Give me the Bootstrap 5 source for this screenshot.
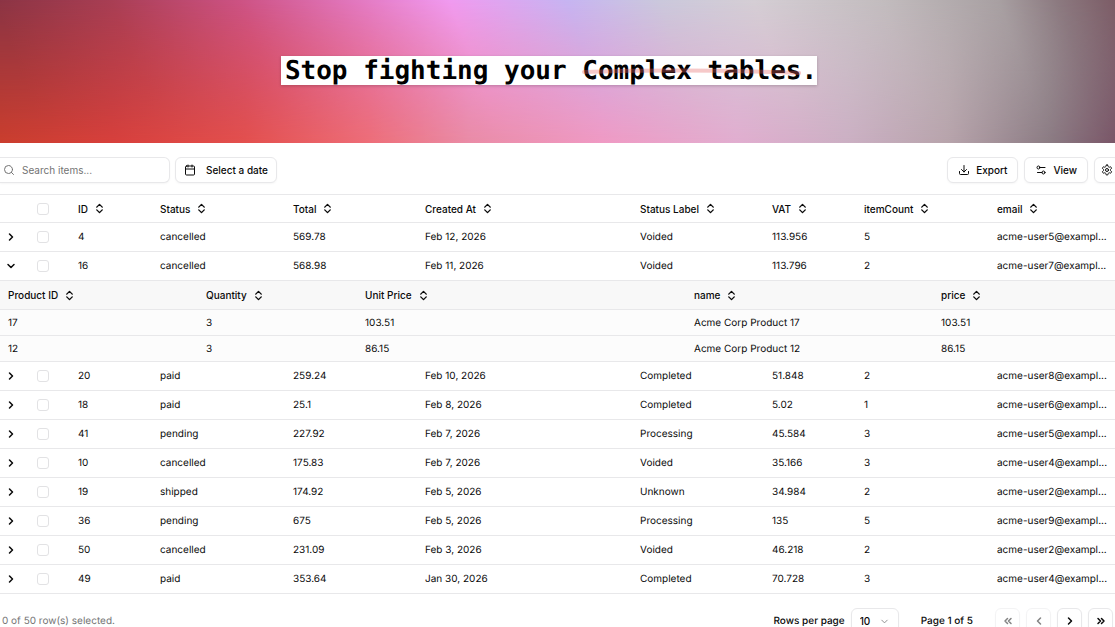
<!DOCTYPE html>
<html lang="en">
<head>
<meta charset="utf-8">
<meta name="viewport" content="width=device-width, initial-scale=1">
<title>Orders</title>
<link href="https://cdn.jsdelivr.net/npm/bootstrap@5.3.0/dist/css/bootstrap.min.css" rel="stylesheet">
<style>
body{font-family:Inter,"Liberation Sans",sans-serif;font-size:10px;line-height:16px;color:#0a0a0a;background:#fff;overflow-x:hidden;text-rendering:geometricPrecision}
svg{fill:none;stroke:currentColor;stroke-width:2;stroke-linecap:round;stroke-linejoin:round;flex:none}
.fw-medium{font-weight:500}
.muted{color:#737373}
.hero{height:143px;position:relative;background:linear-gradient(90deg,#cb3e2e 0%,#d8403c 10%,#e4504e 22%,#ee6e78 33%,#ea8ca6 42%,#f09ac4 54%,#e2aed0 66%,#ccb0c4 76%,#b8a4ac 85%,#8c7c84 94%,#7a5668 100%)}
.hero::before{content:"";position:absolute;inset:0;background:linear-gradient(70deg,#8a3444 4%,#a83e54 14%,#cc5284 25%,#e278c0 35%,#f09af0 43%,#c6b4f2 53%,#cac8dc 61%,#d4ced4 69%,#c2bcbe 80%,#a8a0a2 90%,#8c7a80 95%,#7c5c66 100%);-webkit-mask-image:linear-gradient(#000,transparent);mask-image:linear-gradient(#000,transparent)}
.headline{position:relative;margin:0 17px 3px 0;padding:0 0 0 4px;height:29px;background:#fff;box-shadow:0 1px 3px #0003;font:700 26px/31px "DejaVu Sans Mono",monospace;color:#000;white-space:nowrap}
.struck{position:relative}
.struck svg{position:absolute;left:0;top:12px;width:100%;height:8px;stroke:#e66464;stroke-opacity:.35;stroke-width:4}
.tools{padding:14px 0 11px}
.ctl{height:26px;border:1px solid #e8e8ea;border-radius:6px;background:#fff;color:#0a0a0a;font-size:10px;line-height:16px;font-weight:500;box-shadow:0 1px 2px #0000000a}
.ctl:disabled{color:#0a0a0a;opacity:.5}
.search{width:170px;position:relative}
.search svg{position:absolute;left:3px;top:7px;color:#737373}
.search input{width:100%;border-left:0;border-radius:0 6px 6px 0;padding:0 8px 0 22px;font-weight:400}
.search input::placeholder{color:#737373;opacity:1}
.date{margin-left:5px;gap:10px}
.actions{gap:6px;margin-right:-5px}
.actions .ctl{padding:0 10px;gap:6px}
.actions .gear{padding:0 6px}
.grid{width:100%;table-layout:fixed;margin:0;border-collapse:separate;border-spacing:0}
.grid th,.grid td{height:29px;padding:0 8px;border-bottom:1px solid #e8e8ea;vertical-align:middle;white-space:nowrap;font-weight:400}
.grid th{height:28px;font-weight:500}
.main{border-top:1px solid #e8e8ea}
.grid .toggle{padding:0 5px}
.toggle svg{stroke-width:3}
.grid .nest{padding:0;border:0}
.grid .nest th{height:29px;background:#f8f8f8}
.grid .nest td{height:26px;background:#fcfcfc}
.bare{border:0;background:none;padding:0;color:inherit;font-weight:inherit;display:flex;align-items:center}
.sort{gap:6px}
.sort svg{stroke-width:3}
.tick{appearance:none;display:block;width:12px;height:12px;margin:0 0 0 2px;border:1px solid #e2e2e4;border-radius:3px;background:#fff}
.tick:checked{background:#111}
.pager{padding:14px 0 6px}
.sel{padding-left:2px}
.rowsbox{position:relative;margin-left:6px}
.rowsbox svg{position:absolute;right:9px;top:8px;color:#888;pointer-events:none}
.rows{width:48px;padding:0 8px;appearance:none;background:none}
.pg{margin-left:22px}
.pages{gap:6px;margin:0 2px 0 22px}
.sq{width:25px;padding:0}
.sq svg{display:block;margin:auto;stroke-width:3}
</style>
</head>
<body>
<svg width="0" height="0" class="position-absolute" aria-hidden="true">
<symbol id="sort" viewBox="0 0 24 24"><path d="m6 15 6 6 6-6M6 9l6-6 6 6"/></symbol>
<symbol id="right" viewBox="0 0 24 24"><path d="m9 18 6-6-6-6"/></symbol>
<symbol id="left" viewBox="0 0 24 24"><path d="m15 18-6-6 6-6"/></symbol>
<symbol id="down" viewBox="0 0 24 24"><path d="m6 9 6 6 6-6"/></symbol>
</svg>
<header class="hero d-flex align-items-center justify-content-center">
<h1 class="headline">Stop fighting your <span class="struck">Complex tables<svg viewBox="0 0 216 8" preserveAspectRatio="none" aria-hidden="true"><path d="M2 4C70 2 140 2 214 5"/></svg></span>.</h1>
</header>
<main>
<div class="tools d-flex align-items-center">
<div class="search"><svg width="12" height="12" viewBox="0 0 24 24"><circle cx="11" cy="11" r="8"/><path d="m21 21-4.3-4.3"/></svg><input class="ctl" type="text" placeholder="Search items..." aria-label="Search items"></div>
<button type="button" class="ctl d-flex align-items-center px-2 date"><svg width="12" height="12" viewBox="0 0 24 24"><path d="M8 2v4M16 2v4M3 10h18"/><rect x="3" y="4" width="18" height="18" rx="2"/></svg><span>Select a date</span></button>
<div class="d-flex ms-auto actions">
<button type="button" class="ctl d-flex align-items-center"><svg width="12" height="12" viewBox="0 0 24 24"><path d="M12 3v13M7 11l5 5 5-5M3 15v4a2 2 0 0 0 2 2h14a2 2 0 0 0 2-2v-4"/></svg>Export</button>
<button type="button" class="ctl d-flex align-items-center"><svg width="12" height="12" viewBox="0 0 24 24"><path d="M20 7H9M14 17H5"/><circle cx="17" cy="17" r="3"/><circle cx="7" cy="7" r="3"/></svg>View</button>
<button type="button" class="ctl gear d-flex align-items-center" aria-label="Settings"><svg width="12" height="12" viewBox="0 0 24 24"><path d="M12.220 2h-.44a2 2 0 0 0-2 2v.18a2 2 0 0 1-1 1.730l-.43.25a2 2 0 0 1-2 0l-.15-.08a2 2 0 0 0-2.730.73l-.22.38a2 2 0 0 0 .73 2.730l.15.1a2 2 0 0 1 1 1.720v.51a2 2 0 0 1-1 1.740l-.15.09a2 2 0 0 0-.73 2.730l.22.38a2 2 0 0 0 2.730.73l.15-.08a2 2 0 0 1 2 0l.43.25a2 2 0 0 1 1 1.730V20a2 2 0 0 0 2 2h.44a2 2 0 0 0 2-2v-.18a2 2 0 0 1 1-1.730l.43-.25a2 2 0 0 1 2 0l.15.08a2 2 0 0 0 2.730-.73l.22-.39a2 2 0 0 0-.73-2.730l-.15-.08a2 2 0 0 1-1-1.740v-.5a2 2 0 0 1 1-1.740l.15-.09a2 2 0 0 0 .73-2.730l-.22-.38a2 2 0 0 0-2.730-.73l-.15.08a2 2 0 0 1-2 0l-.43-.25a2 2 0 0 1-1-1.730V4a2 2 0 0 0-2-2z"/><circle cx="12" cy="12" r="3"/></svg></button>
</div>
</div>
<table class="grid main">
<colgroup id="cols"></colgroup>
<thead><tr id="head"></tr></thead>
<tbody id="body"></tbody>
</table>
<div class="pager d-flex align-items-center">
<span class="muted sel">0 of 50 row(s) selected.</span>
<label class="ms-auto fw-medium" for="rpp">Rows per page</label>
<div class="rowsbox"><select id="rpp" class="ctl rows"><option>10</option><option>20</option></select><svg width="11" height="11"><use href="#down"/></svg></div>
<span class="fw-medium pg">Page 1 of 5</span>
<nav class="d-flex pages" aria-label="Pages">
<button type="button" class="ctl sq" disabled aria-label="First page"><svg width="12" height="12" viewBox="0 0 24 24"><path d="m11 17-5-5 5-5M18 17l-5-5 5-5"/></svg></button>
<button type="button" class="ctl sq" disabled aria-label="Previous page"><svg width="12" height="12"><use href="#left"/></svg></button>
<button type="button" class="ctl sq" aria-label="Next page"><svg width="12" height="12"><use href="#right"/></svg></button>
<button type="button" class="ctl sq" aria-label="Last page"><svg width="12" height="12" viewBox="0 0 24 24"><path d="m6 17 5-5-5-5M13 17l5-5-5-5"/></svg></button>
</nav>
</div>
</main>
<script>
const icon=(n,s=12)=>`<svg width="${s}" height="${s}" aria-hidden="true"><use href="#${n}"/></svg>`;
const sortHead=t=>`<th scope="col"><button type="button" class="bare sort">${t} ${icon('sort',11)}</button></th>`;
const cols=w=>w.map(x=>`<col style="width:${x}px">`).join('');
const tick=l=>`<td><input type="checkbox" class="tick" aria-label="${l}"></td>`;
const data=[
['4','cancelled','569.78','Feb 12, 2026','Voided','113.956','5','acme-user5'],
['16','cancelled','568.98','Feb 11, 2026','Voided','113.796','2','acme-user7'],
['20','paid','259.24','Feb 10, 2026','Completed','51.848','2','acme-user8'],
['18','paid','25.1','Feb 8, 2026','Completed','5.02','1','acme-user6'],
['41','pending','227.92','Feb 7, 2026','Processing','45.584','3','acme-user5'],
['10','cancelled','175.83','Feb 7, 2026','Voided','35.166','3','acme-user4'],
['19','shipped','174.92','Feb 5, 2026','Unknown','34.984','2','acme-user2'],
['36','pending','675','Feb 5, 2026','Processing','135','5','acme-user9'],
['50','cancelled','231.09','Feb 3, 2026','Voided','46.218','2','acme-user2'],
['49','paid','353.64','Jan 30, 2026','Completed','70.728','3','acme-user4']];
const items=[['17','3','103.51','Acme Corp Product 17','103.51'],['12','3','86.15','Acme Corp Product 12','86.15']];
document.getElementById('cols').innerHTML=cols([27,43,82,133,132,215,132,92,133,126]);
document.getElementById('head').innerHTML='<th></th>'+tick('Select all').replaceAll('td','th')+['ID','Status','Total','Created At','Status Label','VAT','itemCount','email'].map(sortHead).join('');
const nested=`<tr><td colspan="10" class="nest"><table class="grid"><colgroup>${cols([198,159,329,247,182])}</colgroup><thead><tr>${['Product ID','Quantity','Unit Price','name','price'].map(sortHead).join('')}</tr></thead><tbody>${items.map(r=>'<tr>'+r.map(c=>`<td>${c}</td>`).join('')+'</tr>').join('')}</tbody></table></td></tr>`;
document.getElementById('body').innerHTML=data.map((r,i)=>`<tr><td class="toggle"><button type="button" class="bare" aria-label="Toggle row">${icon(i===1?'down':'right')}</button></td>${tick('Select row')}${r.slice(0,7).map(c=>`<td>${c}</td>`).join('')}<td>${r[7]}@exampl...</td></tr>${i===1?nested:''}`).join('');
</script>
<script src="https://cdn.jsdelivr.net/npm/bootstrap@5.3.0/dist/js/bootstrap.bundle.min.js"></script>
</body>
</html>
